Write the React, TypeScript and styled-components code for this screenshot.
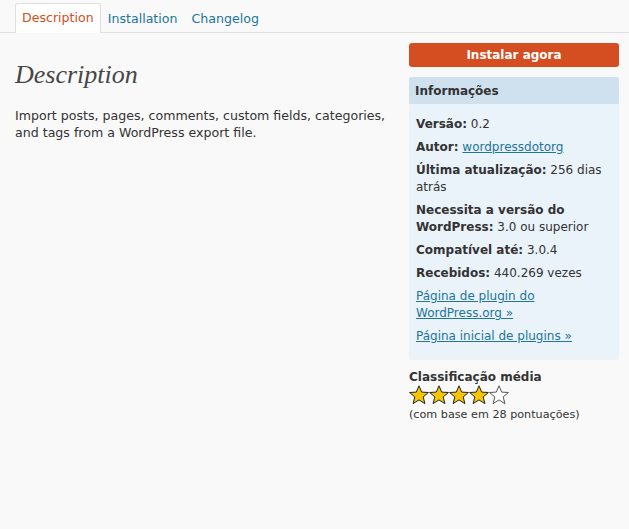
import React from "react";
import styled, { createGlobalStyle } from "styled-components";

const Global = createGlobalStyle`
  html, body { margin: 0; padding: 0; background: #f9f9f9; }
  body { font-family: "DejaVu Sans", Verdana, sans-serif; font-size: 13px; color: #333; }
`;

const Page = styled.div`
  width: 629px;
  height: 529px;
  background: #f9f9f9;
  overflow: hidden;
`;

const Tabs = styled.div`
  display: flex;
  align-items: flex-end;
  height: 33px;
  padding-left: 15px;
  border-bottom: 1px solid #dfdfdf;
  box-sizing: border-box;
`;

const Tab = styled.a<{ $active?: boolean }>`
  display: block;
  height: ${(p) => (p.$active ? "30px" : "29px")};
  line-height: 27px;
  padding: 0 6px;
  margin-bottom: -1px;
  font-size: 12.6px;
  color: ${(p) => (p.$active ? "#d54e21" : "#21759b")};
  background: ${(p) => (p.$active ? "#fff" : "transparent")};
  border: 1px solid ${(p) => (p.$active ? "#dfdfdf" : "transparent")};
  border-bottom: none;
  border-radius: 3px 3px 0 0;
  text-decoration: none;
  box-sizing: border-box;
`;

const Body = styled.div`
  display: flex;
  gap: 10px;
  padding: 10px 10px 0 15px;
`;

const Main = styled.div`
  flex: 1;
`;

const Heading = styled.h2`
  margin: 17px 0 0;
  font-family: "Liberation Serif", Georgia, serif;
  font-style: italic;
  font-weight: normal;
  font-size: 26px;
  line-height: 30px;
  color: #464646;
`;

const Para = styled.p`
  margin: 17px 0 0;
  line-height: 17px;
  font-size: 12.6px;
`;

const Side = styled.div`
  width: 210px;
  flex: none;
`;

const InstallButton = styled.a`
  display: block;
  height: 24px;
  line-height: 24px;
  text-align: center;
  background: #d54e21;
  color: #fff;
  font-weight: bold;
  font-size: 12px;
  border-radius: 3px;
  text-decoration: none;
`;

const InfoBox = styled.div`
  margin-top: 10px;
  background: #eaf2fa;
  border-radius: 3px;
  padding-bottom: 15px;
`;

const InfoHeader = styled.div`
  height: 27px;
  line-height: 28px;
  background: #cfe1ef;
  padding-left: 6px;
  font-weight: bold;
  font-size: 12px;
  color: #333;
  border-radius: 3px 3px 0 0;
`;

const InfoList = styled.ul`
  list-style: none;
  margin: 0;
  padding: 12px 7px 0;
  display: flex;
  flex-direction: column;
  gap: 6px;
`;

const InfoItem = styled.li`
  line-height: 17px;
  font-size: 12px;
  b { font-weight: bold; }
`;

const Link = styled.a`
  color: #21759b;
  text-decoration: underline;
`;

const Rating = styled.div`
  margin-top: 10px;
`;

const RatingTitle = styled.div`
  font-weight: bold;
  font-size: 12px;
  line-height: 15px;
`;

const Stars = styled.div`
  display: flex;
  height: 20px;
`;

const Caption = styled.div`
  font-size: 11.2px;
  line-height: 14px;
  margin-top: 3px;
`;

const Star = ({ filled }: { filled: boolean }) => (
  <svg width="20" height="20" viewBox="0 0 20 20">
    <polygon
      points="10,0.8 12.7,7.1 19.4,7.5 14.2,11.9 15.9,18.6 10,14.9 4.1,18.6 5.8,11.9 0.6,7.5 7.3,7.1"
      fill={filled ? "#f7c600" : "#fff"}
      stroke={filled ? "#222" : "#555"}
      strokeWidth="1"
      strokeLinejoin="miter"
    />
  </svg>
);

export default function App() {
  return (
    <Page>
      <Global />
      <Tabs>
        <Tab $active href="#">Description</Tab>
        <Tab href="#">Installation</Tab>
        <Tab href="#">Changelog</Tab>
      </Tabs>
      <Body>
        <Main>
          <Heading>Description</Heading>
          <Para>
            Import posts, pages, comments, custom fields, categories, and tags from a WordPress export file.
          </Para>
        </Main>
        <Side>
          <InstallButton href="#">Instalar agora</InstallButton>
          <InfoBox>
            <InfoHeader>Informações</InfoHeader>
            <InfoList>
              <InfoItem><b>Versão:</b> 0.2</InfoItem>
              <InfoItem><b>Autor:</b> <Link href="#">wordpressdotorg</Link></InfoItem>
              <InfoItem><b>Última atualização:</b> 256 dias atrás</InfoItem>
              <InfoItem><b>Necessita a versão do WordPress:</b> 3.0 ou superior</InfoItem>
              <InfoItem><b>Compatível até:</b> 3.0.4</InfoItem>
              <InfoItem><b>Recebidos:</b> 440.269 vezes</InfoItem>
              <InfoItem><Link href="#">Página de plugin do WordPress.org »</Link></InfoItem>
              <InfoItem><Link href="#">Página inicial de plugins »</Link></InfoItem>
            </InfoList>
          </InfoBox>
          <Rating>
            <RatingTitle>Classificação média</RatingTitle>
            <Stars>
              {[1, 2, 3, 4, 5].map((i) => (
                <Star key={i} filled={i <= 4} />
              ))}
            </Stars>
            <Caption>(com base em 28 pontuações)</Caption>
          </Rating>
        </Side>
      </Body>
    </Page>
  );
}
